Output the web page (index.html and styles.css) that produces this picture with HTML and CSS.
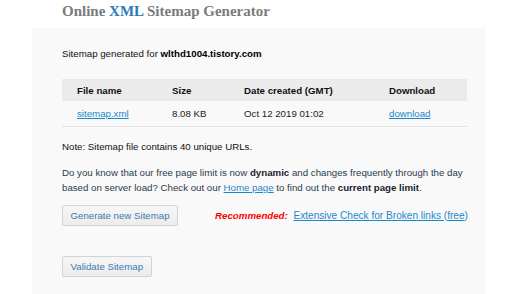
FILE: index.html
```html
<!DOCTYPE html>
<html>
<head>
<meta charset="utf-8">
<link rel="stylesheet" href="styles.css">
</head>
<body>
<h1 class="title">Online <span class="xml">XML</span> Sitemap Generator</h1>
<div class="panel">
  <p class="gen">Sitemap generated for <b>wlthd1004.tistory.com</b></p>
  <table class="files">
    <colgroup><col class="c1"><col class="c2"><col class="c3"><col class="c4"></colgroup>
    <thead>
      <tr><th>File name</th><th>Size</th><th>Date created (GMT)</th><th>Download</th></tr>
    </thead>
    <tbody>
      <tr><td><a href="#">sitemap.xml</a></td><td>8.08 KB</td><td>Oct 12 2019 01:02</td><td><a href="#">download</a></td></tr>
    </tbody>
  </table>
  <p class="note">Note: Sitemap file contains 40 unique URLs.</p>
  <p class="info">Do you know that our free page limit is now <b>dynamic</b> and changes frequently through the day based on server load? Check out our <a href="#">Home page</a> to find out the <b>current page limit</b>.</p>
  <div class="actions">
    <button class="btn">Generate new Sitemap</button>
    <span class="rec"><span class="rec-label">Recommended:</span> <a class="rec-link" href="#">Extensive Check for Broken links </a><span class="rec-free">(<a href="#">free</a>)</span></span>
  </div>
  <div class="actions2">
    <button class="btn">Validate Sitemap</button>
  </div>
</div>
</body>
</html>
```
FILE: styles.css
```css
html, body { margin: 0; padding: 0; background: #fff; }
body { font-family: "Liberation Sans", Arial, sans-serif; font-size: 9.7px; color: #222; }
.title {
  margin: 0;
  padding: 1px 0 0 62px;
  height: 28px;
  box-sizing: border-box;
  font-family: "Liberation Serif", "Times New Roman", serif;
  font-size: 15px;
  font-weight: bold;
  color: #7b7b7b;
  line-height: 20px;
}
.title .xml { color: #2b7bb9; }
.panel {
  margin-left: 32px;
  width: 454px;
  background: #f9f9f9;
  padding: 18px 19px 0 30px;
  box-sizing: border-box;
  height: 266px;
}
.gen { margin: 0; line-height: 16px; color: #111; }
.gen b { color: #000; }
.files {
  margin-top: 17px;
  border-collapse: collapse;
  table-layout: fixed;
  width: 405px;
}
.c1 { width: 95px; }
.c2 { width: 72px; }
.c3 { width: 145px; }
.c4 { width: 93px; }
.files th {
  background: #ebebeb;
  text-align: left;
  font-weight: bold;
  height: 22px;
  padding: 0 0 0 15px;
  color: #111;
}
.files td {
  padding: 0 0 1px 15px;
  height: 24px;
  border-bottom: 1px solid #e2e2e2;
  color: #222;
}
a { color: #1a88c9; text-decoration: underline; }
.note { margin: 12px 0 0; line-height: 15px; color: #111; }
.info { margin: 11px 0 0; line-height: 15px; color: #2b3a4a; }
.info b { color: #1a2530; }
.actions { display: flex; align-items: center; margin-top: 10px; white-space: nowrap; }
.btn {
  font-family: "Liberation Sans", Arial, sans-serif;
  font-size: 9.7px;
  color: #3c7bb0;
  background: linear-gradient(#f7f7f7, #ececec);
  border: 1px solid #d3d3d3;
  border-radius: 2px;
  padding: 0 7.5px;
  height: 21px;
  white-space: nowrap;
  flex-shrink: 0;
  cursor: pointer;
}
.rec { margin-left: 37px; color: #1a88c9; white-space: nowrap; flex-shrink: 0; }
.rec-label { color: #f00; font-weight: bold; font-style: italic; margin-right: 3px; }
.rec-link, .rec-free { font-size: 10.1px; }
.actions2 { margin-top: 30px; }
```
